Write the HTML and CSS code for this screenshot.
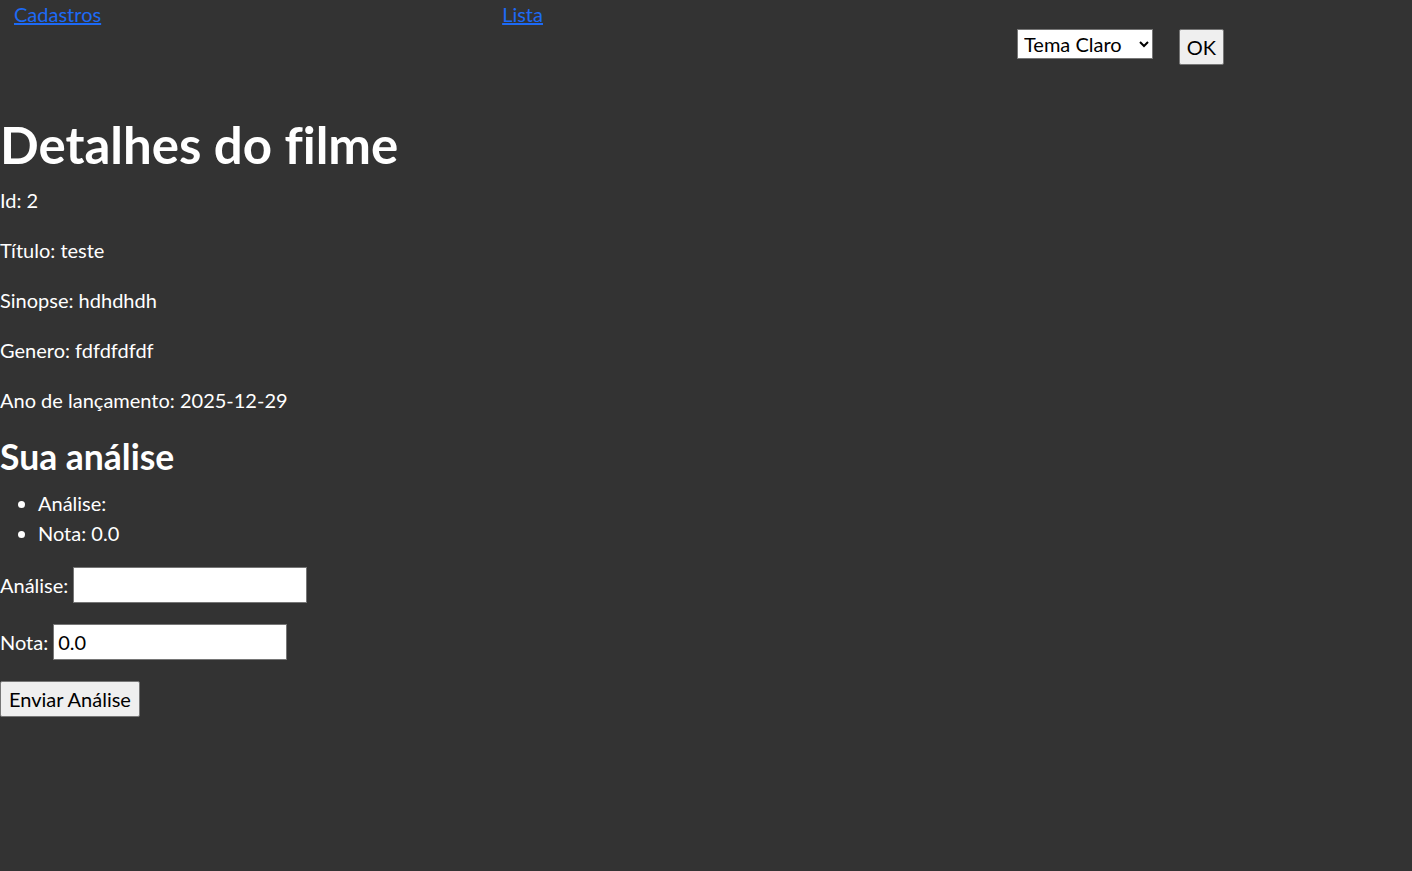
FILE: index.html
```html
<!DOCTYPE html>
<html lang="pt">
<head>
<meta charset="utf-8">
<title>Detalhes do filme</title>
<link rel="stylesheet" href="styles.css">
</head>
<body>
<header class="topbar">
  <a class="nav-link nav-first" href="#">Cadastros</a>
  <a class="nav-link nav-second" href="#">Lista</a>
  <form class="theme-form">
    <select class="theme-select">
      <option>Tema Claro</option>
      <option>Tema Escuro</option>
    </select>
    <button type="button" class="btn btn-ok">OK</button>
  </form>
</header>
<main class="content">
  <h1 class="title">Detalhes do filme</h1>
  <p class="info">Id: 2</p>
  <p class="info">Título: teste</p>
  <p class="info">Sinopse: hdhdhdh</p>
  <p class="info">Genero: fdfdfdfdf</p>
  <p class="info">Ano de lançamento: 2025-12-29</p>
  <h2 class="subtitle">Sua análise</h2>
  <ul class="review-list">
    <li>Análise:</li>
    <li>Nota: 0.0</li>
  </ul>
  <form class="review-form">
    <div class="field"><label>Análise:</label> <input class="text-input" type="text"></div>
    <div class="field"><label>Nota:</label> <input class="text-input" type="text" value="0.0"></div>
    <button type="button" class="btn btn-send">Enviar Análise</button>
  </form>
</main>
</body>
</html>
```
FILE: styles.css
```css
html, body {
  margin: 0;
  padding: 0;
  background: #333333;
  color: #ffffff;
  font-family: Lato, "Noto Sans", sans-serif;
  font-size: 20px;
  line-height: 30px;
  font-variant-ligatures: none;
}
.topbar {
  display: flex;
  align-items: flex-start;
  height: 64px;
}
.nav-link {
  color: #1d6af5;
  text-decoration: underline;
  line-height: 28px;
}
.nav-first { margin-left: 14px; }
.nav-second { margin-left: 401px; }
.theme-form {
  display: flex;
  align-items: flex-start;
  gap: 26px;
  margin-left: 474px;
  margin-top: 29px;
}
.theme-select {
  width: 136px;
  height: 30px;
  font-family: inherit;
  font-size: 20px;
  color: #000;
  background: #fff;
  border: 1px solid #767676;
  border-radius: 0;
  padding: 0 2px;
}
.btn {
  box-sizing: border-box;
  font-family: inherit;
  font-size: 20px;
  color: #000;
  background: #efefef;
  border: 1px solid #767676;
  border-radius: 2px;
  padding: 0 7px;
  height: 36px;
  line-height: 32px;
}
.btn-ok { width: 45px; padding: 0; }
.content { padding: 0; }
.title {
  font-size: 51px;
  font-weight: 700;
  line-height: 60px;
  margin: 51px 0 10px;
}
.info { margin: 0 0 20px; }
.subtitle {
  font-size: 35.5px;
  font-weight: 700;
  line-height: 44px;
  margin: 0 0 9px;
}
.review-list {
  margin: 0 0 19px;
  padding-left: 38px;
}
.field {
  margin-bottom: 21px;
  display: flex;
  align-items: center;
  gap: 5px;
}
.text-input {
  width: 234px;
  height: 36px;
  box-sizing: border-box;
  font-family: inherit;
  font-size: 20px;
  color: #000;
  background: #fff;
  border: 1px solid #767676;
  padding: 1px 4px;
  margin: 0;
}
.btn-send { padding: 0 8px; }
```
